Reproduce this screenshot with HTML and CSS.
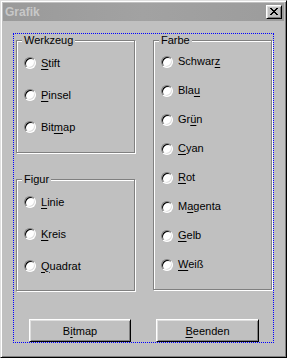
FILE: index.html
```html
<!DOCTYPE html>
<html>
<head>
<meta charset="utf-8">
<link rel="stylesheet" href="styles.css">
</head>
<body>
<div class="window">
  <div class="titlebar">
    <span class="title">Grafik</span>
    <span class="close"><svg width="8" height="7" viewBox="0 0 8 7" shape-rendering="crispEdges"><path d="M0 0h2v1h-2zM6 0h2v1h-2zM1 1h2v1h-2zM5 1h2v1h-2zM2 2h4v1h-4zM3 3h2v1h-2zM2 4h4v1h-4zM1 5h2v1h-2zM5 5h2v1h-2zM0 6h2v1h-2zM6 6h2v1h-2z" fill="#000"/></svg></span>
  </div>
  <div class="content">
    <div class="frame">
      <div class="groups">
        <div class="col">
          <div class="group werkzeug">
            <div class="legend"><span>Werkzeug</span></div>
            <div class="opt tall"><span class="radio"></span><span><u>S</u>tift</span></div>
            <div class="opt tall"><span class="radio"></span><span><u>P</u>insel</span></div>
            <div class="opt tall"><span class="radio"></span><span>Bit<u>m</u>ap</span></div>
          </div>
          <div class="group figur">
            <div class="legend"><span>Figur</span></div>
            <div class="opt tall"><span class="radio"></span><span><u>L</u>inie</span></div>
            <div class="opt tall"><span class="radio"></span><span><u>K</u>reis</span></div>
            <div class="opt tall"><span class="radio"></span><span><u>Q</u>uadrat</span></div>
          </div>
        </div>
        <div class="group farbe">
          <div class="legend"><span>Farbe</span></div>
          <div class="opt"><span class="radio"></span><span>Schwar<u>z</u></span></div>
          <div class="opt"><span class="radio"></span><span>Bla<u>u</u></span></div>
          <div class="opt"><span class="radio"></span><span>Gr<u>ü</u>n</span></div>
          <div class="opt"><span class="radio"></span><span><u>C</u>yan</span></div>
          <div class="opt"><span class="radio"></span><span><u>R</u>ot</span></div>
          <div class="opt"><span class="radio"></span><span>M<u>a</u>genta</span></div>
          <div class="opt"><span class="radio"></span><span><u>G</u>elb</span></div>
          <div class="opt"><span class="radio"></span><span><u>W</u>eiß</span></div>
        </div>
      </div>
      <div class="buttons">
        <button class="btn b1">B<u>i</u>tmap</button>
        <button class="btn b2"><u>B</u>eenden</button>
      </div>
    </div>
  </div>
</div>
</body>
</html>
```
FILE: styles.css
```css
html, body {
  margin: 0;
  padding: 0;
  background: #c0c0c0;
}
.window {
  width: 287px;
  height: 358px;
  box-sizing: border-box;
  border: 1px solid;
  border-color: #dfdfdf #000 #000 #dfdfdf;
  box-shadow: inset 1px 1px 0 #fff, inset -1px -1px 0 #808080;
  padding: 2px;
  background: #c0c0c0;
  display: flex;
  flex-direction: column;
  font-family: "Liberation Sans", Arial, sans-serif;
  font-size: 11px;
  color: #000;
}
.titlebar {
  height: 18px;
  flex: none;
  display: flex;
  align-items: center;
  justify-content: space-between;
  padding: 0 2px;
  background: linear-gradient(90deg, #9a9a9a, #a2a2a2 50%, #9c9c9c);
}
.title {
  font-weight: bold;
  font-size: 12px;
  color: #c8c8c8;
  line-height: 18px;
}
.close {
  width: 16px;
  height: 14px;
  box-sizing: border-box;
  border: 1px solid;
  border-color: #fff #000 #000 #fff;
  box-shadow: inset 1px 1px 0 #dfdfdf, inset -1px -1px 0 #808080;
  background: #c0c0c0;
  display: flex;
  align-items: center;
  justify-content: center;
  padding-bottom: 1px;
}
.close svg {
  display: block;
}
.content {
  flex: 1;
  padding: 12px 0 0 10px;
}
.frame {
  width: 261px;
  height: 310px;
  box-sizing: border-box;
  border: 1px dotted #0000ff;
  display: flex;
  flex-direction: column;
}
.groups {
  display: flex;
  gap: 18px;
  margin: 6px 0 0 2px;
}
.col {
  display: flex;
  flex-direction: column;
  gap: 26px;
}
.group {
  width: 119px;
  box-sizing: border-box;
  border: 1px solid #808080;
  box-shadow: 1px 1px 0 #fff, inset 1px 1px 0 #fff;
}
.werkzeug { height: 113px; }
.figur { height: 112px; }
.farbe { height: 250px; }
.legend {
  display: flex;
  margin: -7px 0 0 5px;
  height: 13px;
  line-height: 13px;
}
.legend span {
  background: #c0c0c0;
  padding: 0 2px;
}
.opt {
  height: 29px;
  display: flex;
  align-items: center;
  gap: 5px;
  padding-left: 7px;
  line-height: 13px;
}
.opt.tall {
  height: 32px;
}
.radio {
  width: 12px;
  height: 12px;
  box-sizing: border-box;
  border-radius: 50%;
  border: 1px solid;
  border-color: #808080 #fff #fff #808080;
  box-shadow: inset 1px 1px 0 #000, inset -1px -1px 0 #dfdfdf;
  background: #fff;
  flex: none;
}
u {
  text-underline-offset: 2px;
}
.buttons {
  margin-top: auto;
  display: flex;
  gap: 25px;
  padding-left: 15px;
}
.btn {
  height: 23px;
  box-sizing: border-box;
  border: 1px solid;
  border-color: #fff #000 #000 #fff;
  box-shadow: inset 1px 1px 0 #dfdfdf, inset -1px -1px 0 #808080;
  background: #c0c0c0;
  font-family: "Liberation Sans", Arial, sans-serif;
  font-size: 11px;
  color: #000;
  padding: 0;
  margin: 0;
}
.b1 { width: 102px; }
.b2 { width: 103px; }
```
